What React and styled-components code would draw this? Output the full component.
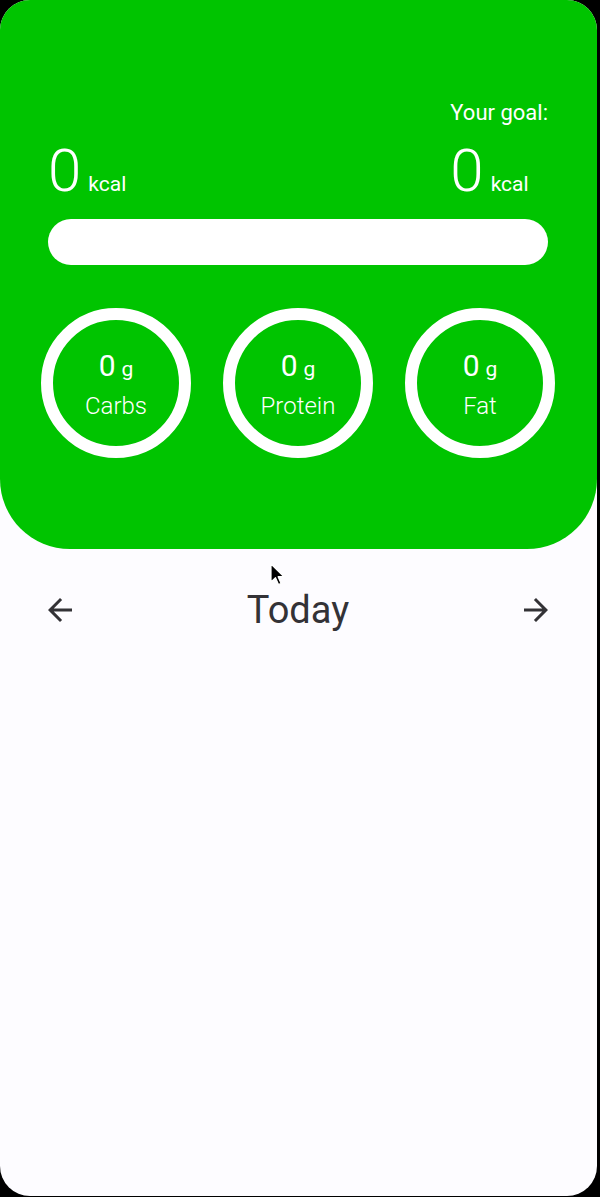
import styled, { createGlobalStyle } from "styled-components";

const GlobalStyle = createGlobalStyle`
  html, body {
    margin: 0;
    padding: 0;
    background: #000;
  }
  body {
    font-family: Roboto, "Liberation Sans", sans-serif;
  }
`;

const Phone = styled.div`
  position: relative;
  width: 597px;
  height: 1196px;
  border-radius: 30px;
  overflow: hidden;
  background: #fdfcff;
`;

const Header = styled.section`
  background: #00c400;
  border-radius: 0 0 70px 70px;
  padding: 102px 49px 91px 48px;
  color: #fff;
`;

const Totals = styled.div`
  display: flex;
  justify-content: space-between;
  align-items: flex-end;
`;

const Column = styled.div`
  display: flex;
  flex-direction: column;
  align-items: flex-start;
`;

const GoalLabel = styled.div`
  font-size: 22px;
  line-height: 21px;
  margin-bottom: 18px;
`;

const Amount = styled.div`
  display: flex;
  align-items: baseline;

  .value {
    font-size: 60px;
    line-height: 60px;
    font-weight: 300;
  }

  .unit {
    font-size: 21px;
    margin-left: 7px;
  }
`;

const Bar = styled.div`
  margin-top: 18px;
  height: 46px;
  border-radius: 23px;
  background: #fff;
`;

const Macros = styled.div`
  display: flex;
  justify-content: center;
  gap: 32px;
  margin: 43px -48px 0 -48px;
`;

const Ring = styled.div`
  box-sizing: border-box;
  width: 150px;
  height: 150px;
  border: 12px solid #fff;
  border-radius: 50%;
  display: flex;
  flex-direction: column;
  align-items: center;
  justify-content: center;
  padding-top: 2px;
`;

const MacroValue = styled.div`
  line-height: 36px;

  .value {
    font-size: 30px;
  }

  .unit {
    font-size: 21px;
    margin-left: 6px;
  }
`;

const MacroName = styled.div`
  margin-top: 3px;
  font-size: 24px;
  line-height: 28px;
  font-weight: 300;
`;

const DayNav = styled.nav`
  display: flex;
  justify-content: space-between;
  align-items: center;
  margin-top: 43px;
  padding: 0 43px 0 42px;
  color: #333236;
`;

const Title = styled.h1`
  margin: 0;
  font-size: 38px;
  line-height: 36px;
  font-weight: 400;
`;

const IconButton = styled.button`
  width: 36px;
  height: 36px;
  padding: 0;
  border: none;
  background: none;
  color: inherit;
  display: flex;

  svg {
    width: 36px;
    height: 36px;
  }
`;

const Cursor = styled.svg`
  position: absolute;
  left: 270px;
  top: 563px;
  width: 16px;
  height: 24px;
`;

const macros = ["Carbs", "Protein", "Fat"];

function Amt({ value, unit }) {
  return (
    <Amount>
      <span className="value">{value}</span>
      <span className="unit">{unit}</span>
    </Amount>
  );
}

export default function App() {
  return (
    <>
      <GlobalStyle />
      <Phone>
        <Header>
          <Totals>
            <Column>
              <Amt value="0" unit="kcal" />
            </Column>
            <Column>
              <GoalLabel>Your goal:</GoalLabel>
              <Amt value="0" unit="kcal" />
            </Column>
          </Totals>
          <Bar />
          <Macros>
            {macros.map((name) => (
              <Ring key={name}>
                <MacroValue>
                  <span className="value">0</span>
                  <span className="unit">g</span>
                </MacroValue>
                <MacroName>{name}</MacroName>
              </Ring>
            ))}
          </Macros>
        </Header>
        <DayNav>
          <IconButton aria-label="Previous day">
            <svg viewBox="0 0 24 24" fill="currentColor">
              <path d="M20 11H7.83l5.59-5.59L12 4l-8 8 8 8 1.41-1.41L7.83 13H20v-2z" />
            </svg>
          </IconButton>
          <Title>Today</Title>
          <IconButton aria-label="Next day">
            <svg viewBox="0 0 24 24" fill="currentColor">
              <path d="M12 4l-1.41 1.41L16.17 11H4v2h12.17l-5.58 5.59L12 20l8-8z" />
            </svg>
          </IconButton>
        </DayNav>
        <Cursor viewBox="0 0 16 24">
          <path
            d="M1 1v18l4.5-4.3 3 6.8 2.6-1.1-3-6.7H14z"
            fill="#000"
            stroke="#fff"
            strokeWidth="1.2"
            strokeLinejoin="round"
          />
        </Cursor>
      </Phone>
    </>
  );
}
